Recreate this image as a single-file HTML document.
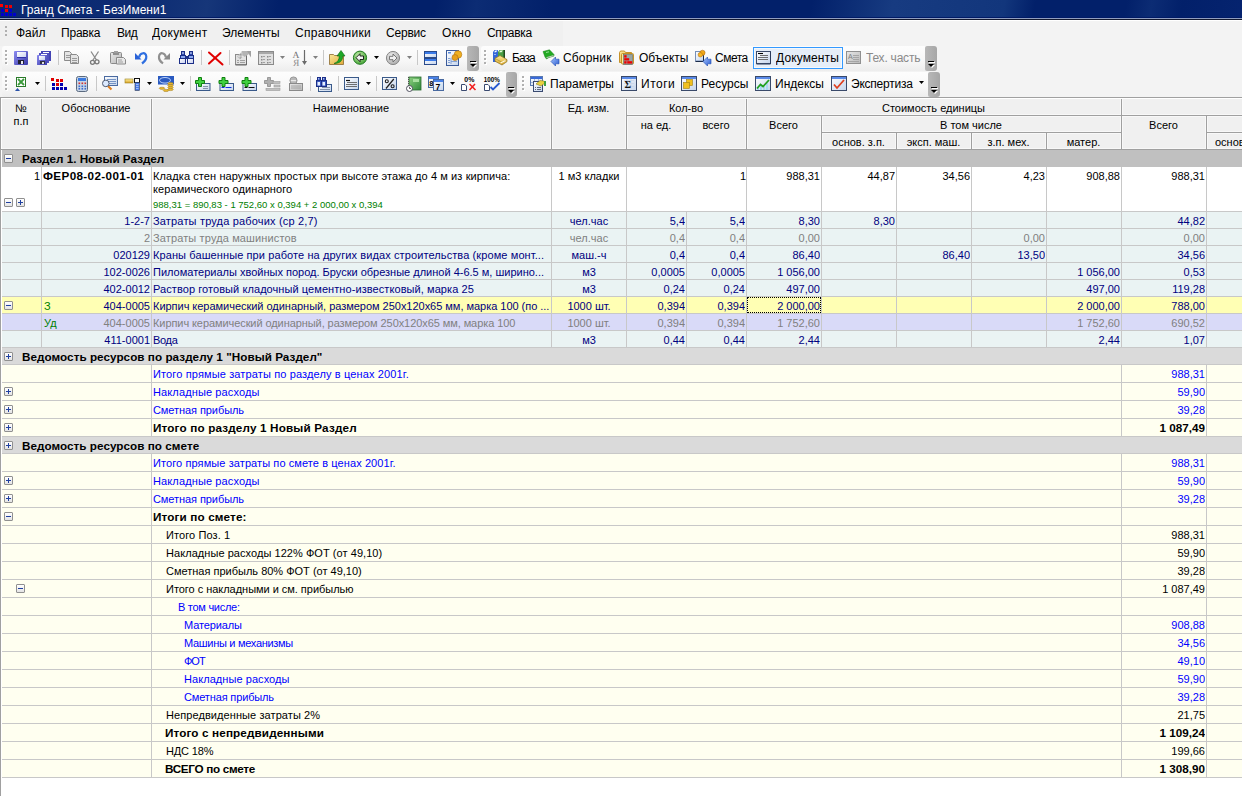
<!DOCTYPE html><html><head><meta charset="utf-8"><style>
*{margin:0;padding:0;box-sizing:border-box}
html,body{width:1242px;height:796px;overflow:hidden;background:#fff;font-family:"Liberation Sans", sans-serif;font-size:11px;color:#000}
#root div{position:absolute}
.t{white-space:nowrap;overflow:hidden}
svg{position:absolute;overflow:visible}
</style></head><body><div id="root">
<div style="left:0px;top:0px;width:1242px;height:17px;background:linear-gradient(100deg,#0a2870 0px,#0e2d74 150px,#163679 205px,#02206a 275px,#02206a 430px,#0c2c74 470px,#02206a 545px,#02206a 800px,#173b81 880px,#12367c 990px,#02206a 1020px,#02206a 1110px,#0c2c74 1135px,#02206a 1165px,#062470 1242px)"></div>
<div style="left:0px;top:17px;width:1242px;height:1px;background:#001a66"></div>
<div style="left:0px;top:18px;width:1242px;height:1px;background:#909ebf"></div>
<div style="left:0px;top:19px;width:1242px;height:1px;background:#12182e"></div>
<div style="left:0px;top:20px;width:1242px;height:1px;background:#ffffff"></div>
<div style="left:0px;top:4px;width:3px;height:3px;background:#f00"></div>
<div style="left:5px;top:5px;width:3px;height:3px;background:#e00"></div>
<div style="left:9px;top:5px;width:3px;height:3px;background:#e00"></div>
<div style="left:1px;top:9px;width:3px;height:3px;background:#00c"></div>
<div style="left:5px;top:9px;width:3px;height:3px;background:#e00"></div>
<div style="left:9px;top:9px;width:3px;height:3px;background:#00c"></div>
<div style="left:1px;top:13px;width:3px;height:3px;background:#00c"></div>
<div style="left:5px;top:13px;width:3px;height:3px;background:#00c"></div>
<div style="left:9px;top:13px;width:3px;height:3px;background:#00c"></div>
<div style="left:13px;top:13px;width:3px;height:3px;background:#00c"></div>
<div class="t" style="left:21px;top:2px;width:300px;height:16px;line-height:16px;text-align:left;color:#fff;font-size:12px">Гранд Смета - БезИмени1</div>
<div style="left:0px;top:21px;width:1242px;height:76px;background:#f3f3f3"></div>
<div style="left:0px;top:21px;width:563px;height:25px;background:#f0f0f0"></div>
<div style="left:5px;top:26px;width:2px;height:2px;background:#b0b0b0"></div>
<div style="left:5px;top:30px;width:2px;height:2px;background:#b0b0b0"></div>
<div style="left:5px;top:34px;width:2px;height:2px;background:#b0b0b0"></div>
<div class="t" style="left:16px;top:25px;width:36px;height:16px;line-height:16px;text-align:left;font-size:12px;color:#000">Файл</div>
<div class="t" style="left:61px;top:25px;width:47px;height:16px;line-height:16px;text-align:left;font-size:12px;color:#000;letter-spacing:-0.200px">Правка</div>
<div class="t" style="left:117px;top:25px;width:28px;height:16px;line-height:16px;text-align:left;font-size:12px;color:#000;letter-spacing:-0.500px">Вид</div>
<div class="t" style="left:152px;top:25px;width:62px;height:16px;line-height:16px;text-align:left;font-size:12px;color:#000;letter-spacing:0.286px">Документ</div>
<div class="t" style="left:222px;top:25px;width:64px;height:16px;line-height:16px;text-align:left;font-size:12px;color:#000">Элементы</div>
<div class="t" style="left:295px;top:25px;width:82px;height:16px;line-height:16px;text-align:left;font-size:12px;color:#000;letter-spacing:0.300px">Справочники</div>
<div class="t" style="left:386px;top:25px;width:47px;height:16px;line-height:16px;text-align:left;font-size:12px;color:#000;letter-spacing:-0.200px">Сервис</div>
<div class="t" style="left:442px;top:25px;width:36px;height:16px;line-height:16px;text-align:left;font-size:12px;color:#000;letter-spacing:0.333px">Окно</div>
<div class="t" style="left:487px;top:25px;width:53px;height:16px;line-height:16px;text-align:left;font-size:12px;color:#000;letter-spacing:-0.333px">Справка</div>
<div style="left:2px;top:46px;width:469px;height:25px;background:linear-gradient(180deg,#fdfdfd 0%,#f7f7f7 60%,#ededed 100%);border-radius:3px"></div>
<div style="left:467px;top:46px;width:12px;height:25px;background:linear-gradient(90deg,#b8b8b8,#a6a6a6);border-radius:2px 3px 3px 2px"></div>
<div style="left:470px;top:61px;width:6px;height:1px;background:#000"></div>
<div style="left:471px;top:62px;width:6px;height:1px;background:#fff"></div>
<svg style="left:470px;top:64px" width="8" height="5"><path d="M1 1h6l-3 3z" fill="#fff"/><path d="M0 0h6l-3 3z" fill="#000"/></svg>
<div style="left:5px;top:50px;width:2px;height:2px;background:#b0b0b0;box-shadow:1px 1px 0 #fff"></div>
<div style="left:5px;top:54px;width:2px;height:2px;background:#b0b0b0;box-shadow:1px 1px 0 #fff"></div>
<div style="left:5px;top:58px;width:2px;height:2px;background:#b0b0b0;box-shadow:1px 1px 0 #fff"></div>
<div style="left:5px;top:62px;width:2px;height:2px;background:#b0b0b0;box-shadow:1px 1px 0 #fff"></div>
<div style="left:481px;top:46px;width:448px;height:25px;background:linear-gradient(180deg,#fdfdfd 0%,#f7f7f7 60%,#ededed 100%);border-radius:3px"></div>
<div style="left:925px;top:46px;width:12px;height:25px;background:linear-gradient(90deg,#b8b8b8,#a6a6a6);border-radius:2px 3px 3px 2px"></div>
<div style="left:928px;top:61px;width:6px;height:1px;background:#000"></div>
<div style="left:929px;top:62px;width:6px;height:1px;background:#fff"></div>
<svg style="left:928px;top:64px" width="8" height="5"><path d="M1 1h6l-3 3z" fill="#fff"/><path d="M0 0h6l-3 3z" fill="#000"/></svg>
<div style="left:484px;top:50px;width:2px;height:2px;background:#b0b0b0;box-shadow:1px 1px 0 #fff"></div>
<div style="left:484px;top:54px;width:2px;height:2px;background:#b0b0b0;box-shadow:1px 1px 0 #fff"></div>
<div style="left:484px;top:58px;width:2px;height:2px;background:#b0b0b0;box-shadow:1px 1px 0 #fff"></div>
<div style="left:484px;top:62px;width:2px;height:2px;background:#b0b0b0;box-shadow:1px 1px 0 #fff"></div>
<div style="left:2px;top:72px;width:508px;height:25px;background:linear-gradient(180deg,#fdfdfd 0%,#f7f7f7 60%,#ededed 100%);border-radius:3px"></div>
<div style="left:506px;top:72px;width:11px;height:25px;background:linear-gradient(90deg,#b8b8b8,#a6a6a6);border-radius:2px 3px 3px 2px"></div>
<div style="left:508px;top:87px;width:6px;height:1px;background:#000"></div>
<div style="left:509px;top:88px;width:6px;height:1px;background:#fff"></div>
<svg style="left:508px;top:90px" width="8" height="5"><path d="M1 1h6l-3 3z" fill="#fff"/><path d="M0 0h6l-3 3z" fill="#000"/></svg>
<div style="left:5px;top:76px;width:2px;height:2px;background:#b0b0b0;box-shadow:1px 1px 0 #fff"></div>
<div style="left:5px;top:80px;width:2px;height:2px;background:#b0b0b0;box-shadow:1px 1px 0 #fff"></div>
<div style="left:5px;top:84px;width:2px;height:2px;background:#b0b0b0;box-shadow:1px 1px 0 #fff"></div>
<div style="left:5px;top:88px;width:2px;height:2px;background:#b0b0b0;box-shadow:1px 1px 0 #fff"></div>
<div style="left:519px;top:72px;width:413px;height:25px;background:linear-gradient(180deg,#fdfdfd 0%,#f7f7f7 60%,#ededed 100%);border-radius:3px"></div>
<div style="left:928px;top:72px;width:12px;height:25px;background:linear-gradient(90deg,#b8b8b8,#a6a6a6);border-radius:2px 3px 3px 2px"></div>
<div style="left:931px;top:87px;width:6px;height:1px;background:#000"></div>
<div style="left:932px;top:88px;width:6px;height:1px;background:#fff"></div>
<svg style="left:931px;top:90px" width="8" height="5"><path d="M1 1h6l-3 3z" fill="#fff"/><path d="M0 0h6l-3 3z" fill="#000"/></svg>
<div style="left:522px;top:76px;width:2px;height:2px;background:#b0b0b0;box-shadow:1px 1px 0 #fff"></div>
<div style="left:522px;top:80px;width:2px;height:2px;background:#b0b0b0;box-shadow:1px 1px 0 #fff"></div>
<div style="left:522px;top:84px;width:2px;height:2px;background:#b0b0b0;box-shadow:1px 1px 0 #fff"></div>
<div style="left:522px;top:88px;width:2px;height:2px;background:#b0b0b0;box-shadow:1px 1px 0 #fff"></div>
<div style="left:58px;top:50px;width:1px;height:15px;background:#c8c8c8"></div>
<div style="left:201px;top:50px;width:1px;height:15px;background:#c8c8c8"></div>
<div style="left:229px;top:50px;width:1px;height:15px;background:#c8c8c8"></div>
<div style="left:323px;top:50px;width:1px;height:15px;background:#c8c8c8"></div>
<div style="left:417px;top:50px;width:1px;height:15px;background:#c8c8c8"></div>
<div style="left:45px;top:76px;width:1px;height:15px;background:#c8c8c8"></div>
<div style="left:96px;top:76px;width:1px;height:15px;background:#c8c8c8"></div>
<div style="left:190px;top:76px;width:1px;height:15px;background:#c8c8c8"></div>
<div style="left:310px;top:76px;width:1px;height:15px;background:#c8c8c8"></div>
<div style="left:338px;top:76px;width:1px;height:15px;background:#c8c8c8"></div>
<div style="left:376px;top:76px;width:1px;height:15px;background:#c8c8c8"></div>
<div style="left:753px;top:47px;width:90px;height:22px;background:#e6eef8;border:1px solid #3399ff;box-shadow:inset 0 0 0 1px #f4f8fc"></div>
<div class="t" style="left:512px;top:50px;width:28px;height:16px;line-height:16px;text-align:left;font-size:12px;color:#000;letter-spacing:-1.000px">База</div>
<div class="t" style="left:563px;top:50px;width:54px;height:16px;line-height:16px;text-align:left;font-size:12px;color:#000;letter-spacing:0.167px">Сборник</div>
<div class="t" style="left:639px;top:50px;width:54px;height:16px;line-height:16px;text-align:left;font-size:12px;color:#000">Объекты</div>
<div class="t" style="left:715px;top:50px;width:37px;height:16px;line-height:16px;text-align:left;font-size:12px;color:#000;letter-spacing:-0.500px">Смета</div>
<div class="t" style="left:776px;top:50px;width:65px;height:16px;line-height:16px;text-align:left;font-size:12px;color:#000;letter-spacing:0.125px">Документы</div>
<div class="t" style="left:866px;top:50px;width:58px;height:16px;line-height:16px;text-align:left;font-size:12px;color:#8a8a8a;letter-spacing:-0.222px">Тех. часть</div>
<div class="t" style="left:550px;top:76px;width:68px;height:16px;line-height:16px;text-align:left;font-size:12px;color:#000">Параметры</div>
<div class="t" style="left:641px;top:76px;width:37px;height:16px;line-height:16px;text-align:left;font-size:12px;color:#000;letter-spacing:0.500px">Итоги</div>
<div class="t" style="left:701px;top:76px;width:51px;height:16px;line-height:16px;text-align:left;font-size:12px;color:#000">Ресурсы</div>
<div class="t" style="left:775px;top:76px;width:53px;height:16px;line-height:16px;text-align:left;font-size:12px;color:#000">Индексы</div>
<div class="t" style="left:851px;top:76px;width:66px;height:16px;line-height:16px;text-align:left;font-size:12px;color:#000;letter-spacing:-0.222px">Экспертиза</div>
<div style="left:0px;top:97px;width:1242px;height:1px;background:#a0a0a0"></div>
<div style="left:0px;top:97px;width:1px;height:699px;background:#a0a0a0"></div>
<div style="left:1px;top:98px;width:1241px;height:698px;background:#fff"></div>
<div style="left:1px;top:98px;width:1241px;height:51px;background:#f0f0f0;border-top:1px solid #fff;border-left:1px solid #fff"></div>
<div style="left:1px;top:149px;width:1241px;height:1px;background:#a0a0a0"></div>
<div style="left:2px;top:148px;width:1240px;height:1px;background:#f8f8f8"></div>
<div style="left:626px;top:115px;width:616px;height:1px;background:#a0a0a0;box-shadow:0 -1px 0 #f8f8f8,0 1px 0 #f8f8f8"></div>
<div style="left:821px;top:132px;width:300px;height:1px;background:#a0a0a0;box-shadow:0 -1px 0 #f8f8f8,0 1px 0 #f8f8f8"></div>
<div style="left:1206px;top:132px;width:36px;height:1px;background:#a0a0a0;box-shadow:0 -1px 0 #f8f8f8,0 1px 0 #f8f8f8"></div>
<div style="left:41px;top:99px;width:1px;height:50px;background:#a0a0a0;box-shadow:-1px 0 0 #f8f8f8,1px 0 0 #f8f8f8"></div>
<div style="left:151px;top:99px;width:1px;height:50px;background:#a0a0a0;box-shadow:-1px 0 0 #f8f8f8,1px 0 0 #f8f8f8"></div>
<div style="left:551px;top:99px;width:1px;height:50px;background:#a0a0a0;box-shadow:-1px 0 0 #f8f8f8,1px 0 0 #f8f8f8"></div>
<div style="left:626px;top:99px;width:1px;height:50px;background:#a0a0a0;box-shadow:-1px 0 0 #f8f8f8,1px 0 0 #f8f8f8"></div>
<div style="left:746px;top:99px;width:1px;height:50px;background:#a0a0a0;box-shadow:-1px 0 0 #f8f8f8,1px 0 0 #f8f8f8"></div>
<div style="left:1121px;top:99px;width:1px;height:50px;background:#a0a0a0;box-shadow:-1px 0 0 #f8f8f8,1px 0 0 #f8f8f8"></div>
<div style="left:686px;top:116px;width:1px;height:33px;background:#a0a0a0;box-shadow:-1px 0 0 #f8f8f8,1px 0 0 #f8f8f8"></div>
<div style="left:821px;top:116px;width:1px;height:33px;background:#a0a0a0;box-shadow:-1px 0 0 #f8f8f8,1px 0 0 #f8f8f8"></div>
<div style="left:896px;top:133px;width:1px;height:16px;background:#a0a0a0;box-shadow:-1px 0 0 #f8f8f8,1px 0 0 #f8f8f8"></div>
<div style="left:971px;top:133px;width:1px;height:16px;background:#a0a0a0;box-shadow:-1px 0 0 #f8f8f8,1px 0 0 #f8f8f8"></div>
<div style="left:1046px;top:133px;width:1px;height:16px;background:#a0a0a0;box-shadow:-1px 0 0 #f8f8f8,1px 0 0 #f8f8f8"></div>
<div style="left:1206px;top:116px;width:1px;height:33px;background:#a0a0a0;box-shadow:-1px 0 0 #f8f8f8,1px 0 0 #f8f8f8"></div>
<div style="left:626px;top:115px;width:616px;height:1px;background:#a0a0a0"></div>
<div style="left:821px;top:132px;width:300px;height:1px;background:#a0a0a0"></div>
<div style="left:1206px;top:132px;width:36px;height:1px;background:#a0a0a0"></div>
<div class="t" style="left:1px;top:102px;width:40px;height:13px;line-height:13px;text-align:center;color:#000">№</div>
<div class="t" style="left:1px;top:115px;width:40px;height:13px;line-height:13px;text-align:center;color:#000">п.п</div>
<div class="t" style="left:41px;top:102px;width:110px;height:13px;line-height:13px;text-align:center;color:#000">Обоснование</div>
<div class="t" style="left:151px;top:102px;width:400px;height:13px;line-height:13px;text-align:center;color:#000">Наименование</div>
<div class="t" style="left:551px;top:102px;width:75px;height:13px;line-height:13px;text-align:center;color:#000">Ед. изм.</div>
<div class="t" style="left:626px;top:102px;width:120px;height:13px;line-height:13px;text-align:center;color:#000">Кол-во</div>
<div class="t" style="left:626px;top:119px;width:60px;height:13px;line-height:13px;text-align:center;color:#000">на ед.</div>
<div class="t" style="left:686px;top:119px;width:60px;height:13px;line-height:13px;text-align:center;color:#000">всего</div>
<div class="t" style="left:746px;top:102px;width:375px;height:13px;line-height:13px;text-align:center;color:#000">Стоимость единицы</div>
<div class="t" style="left:746px;top:119px;width:75px;height:13px;line-height:13px;text-align:center;color:#000">Всего</div>
<div class="t" style="left:821px;top:119px;width:300px;height:13px;line-height:13px;text-align:center;color:#000">В том числе</div>
<div class="t" style="left:821px;top:136px;width:75px;height:13px;line-height:13px;text-align:center;color:#000">основ. з.п.</div>
<div class="t" style="left:896px;top:136px;width:75px;height:13px;line-height:13px;text-align:center;color:#000">эксп. маш.</div>
<div class="t" style="left:971px;top:136px;width:75px;height:13px;line-height:13px;text-align:center;color:#000">з.п. мех.</div>
<div class="t" style="left:1046px;top:136px;width:75px;height:13px;line-height:13px;text-align:center;color:#000">матер.</div>
<div class="t" style="left:1121px;top:119px;width:85px;height:13px;line-height:13px;text-align:center;color:#000">Всего</div>
<div class="t" style="left:1215px;top:136px;width:60px;height:13px;line-height:13px;text-align:left;color:#000">основ. з.п.</div>
<div style="left:2px;top:150px;width:1240px;height:17px;background:#c0c0c0"></div>
<div style="left:4px;top:154px;width:9px;height:9px;background:linear-gradient(180deg,#fff,#e4e4e4);border:1px solid #909090;border-radius:1px"></div>
<div style="left:6px;top:158px;width:5px;height:1px;background:#2040a0"></div>
<div class="t" style="left:22px;top:152px;width:400px;height:13px;line-height:13px;text-align:left;font-weight:bold;font-size:11.7px">Раздел 1. Новый Раздел</div>
<div class="t" style="left:2px;top:170px;width:38px;height:13px;line-height:13px;text-align:right;color:#000;">1</div>
<div class="t" style="left:43px;top:169px;width:107px;height:13px;line-height:13px;text-align:left;color:#000;font-weight:bold;font-size:11.7px;letter-spacing:0.357px">ФЕР08-02-001-01</div>
<div class="t" style="left:153px;top:170px;width:398px;height:13px;line-height:13px;text-align:left;color:#000;letter-spacing:0.095px">Кладка стен наружных простых при высоте этажа до 4 м из кирпича:</div>
<div class="t" style="left:153px;top:183px;width:398px;height:13px;line-height:13px;text-align:left;color:#000;letter-spacing:0.087px">керамического одинарного</div>
<div class="t" style="left:153px;top:200px;width:398px;height:10px;line-height:10px;text-align:left;color:#008000;font-size:9.5px">988,31 = 890,83 - 1 752,60 x 0,394 + 2 000,00 x 0,394</div>
<div class="t" style="left:552px;top:170px;width:74px;height:13px;line-height:13px;text-align:center;color:#000;">1 м3 кладки</div>
<div class="t" style="left:687px;top:170px;width:59px;height:13px;line-height:13px;text-align:right;color:#000;">1</div>
<div class="t" style="left:747px;top:170px;width:73px;height:13px;line-height:13px;text-align:right;color:#000;">988,31</div>
<div class="t" style="left:822px;top:170px;width:73px;height:13px;line-height:13px;text-align:right;color:#000;">44,87</div>
<div class="t" style="left:897px;top:170px;width:73px;height:13px;line-height:13px;text-align:right;color:#000;">34,56</div>
<div class="t" style="left:972px;top:170px;width:73px;height:13px;line-height:13px;text-align:right;color:#000;">4,23</div>
<div class="t" style="left:1047px;top:170px;width:73px;height:13px;line-height:13px;text-align:right;color:#000;">908,88</div>
<div class="t" style="left:1122px;top:170px;width:83px;height:13px;line-height:13px;text-align:right;color:#000;">988,31</div>
<div style="left:4px;top:198px;width:9px;height:9px;background:linear-gradient(180deg,#fff,#e4e4e4);border:1px solid #909090;border-radius:1px"></div>
<div style="left:6px;top:202px;width:5px;height:1px;background:#2040a0"></div>
<div style="left:16px;top:198px;width:9px;height:9px;background:linear-gradient(180deg,#fff,#e4e4e4);border:1px solid #909090;border-radius:1px"></div>
<div style="left:18px;top:202px;width:5px;height:1px;background:#2040a0"></div>
<div style="left:20px;top:200px;width:1px;height:5px;background:#2040a0"></div>
<div style="left:2px;top:212px;width:1240px;height:16px;background:#eaf3f3"></div>
<div class="t" style="left:42px;top:215px;width:108px;height:13px;line-height:13px;text-align:right;color:#000080;">1-2-7</div>
<div class="t" style="left:153px;top:215px;width:397px;height:13px;line-height:13px;text-align:left;color:#000080;;letter-spacing:0.172px">Затраты труда рабочих (ср 2,7)</div>
<div class="t" style="left:552px;top:215px;width:74px;height:13px;line-height:13px;text-align:center;color:#000080;">чел.час</div>
<div class="t" style="left:627px;top:215px;width:58px;height:13px;line-height:13px;text-align:right;color:#000080;">5,4</div>
<div class="t" style="left:687px;top:215px;width:58px;height:13px;line-height:13px;text-align:right;color:#000080;">5,4</div>
<div class="t" style="left:747px;top:215px;width:73px;height:13px;line-height:13px;text-align:right;color:#000080;">8,30</div>
<div class="t" style="left:822px;top:215px;width:73px;height:13px;line-height:13px;text-align:right;color:#000080;">8,30</div>
<div class="t" style="left:1122px;top:215px;width:83px;height:13px;line-height:13px;text-align:right;color:#000080;">44,82</div>
<div style="left:2px;top:229px;width:1240px;height:16px;background:#eaf3f3"></div>
<div class="t" style="left:42px;top:232px;width:108px;height:13px;line-height:13px;text-align:right;color:#808080;">2</div>
<div class="t" style="left:153px;top:232px;width:397px;height:13px;line-height:13px;text-align:left;color:#808080;;letter-spacing:0.130px">Затраты труда машинистов</div>
<div class="t" style="left:552px;top:232px;width:74px;height:13px;line-height:13px;text-align:center;color:#808080;">чел.час</div>
<div class="t" style="left:627px;top:232px;width:58px;height:13px;line-height:13px;text-align:right;color:#808080;">0,4</div>
<div class="t" style="left:687px;top:232px;width:58px;height:13px;line-height:13px;text-align:right;color:#808080;">0,4</div>
<div class="t" style="left:747px;top:232px;width:73px;height:13px;line-height:13px;text-align:right;color:#808080;">0,00</div>
<div class="t" style="left:972px;top:232px;width:73px;height:13px;line-height:13px;text-align:right;color:#808080;">0,00</div>
<div class="t" style="left:1122px;top:232px;width:83px;height:13px;line-height:13px;text-align:right;color:#808080;">0,00</div>
<div style="left:2px;top:246px;width:1240px;height:16px;background:#eaf3f3"></div>
<div class="t" style="left:42px;top:249px;width:108px;height:13px;line-height:13px;text-align:right;color:#000080;">020129</div>
<div class="t" style="left:153px;top:249px;width:397px;height:13px;line-height:13px;text-align:left;color:#000080;;letter-spacing:0.101px">Краны башенные при работе на других видах строительства (кроме монт...</div>
<div class="t" style="left:552px;top:249px;width:74px;height:13px;line-height:13px;text-align:center;color:#000080;">маш.-ч</div>
<div class="t" style="left:627px;top:249px;width:58px;height:13px;line-height:13px;text-align:right;color:#000080;">0,4</div>
<div class="t" style="left:687px;top:249px;width:58px;height:13px;line-height:13px;text-align:right;color:#000080;">0,4</div>
<div class="t" style="left:747px;top:249px;width:73px;height:13px;line-height:13px;text-align:right;color:#000080;">86,40</div>
<div class="t" style="left:897px;top:249px;width:73px;height:13px;line-height:13px;text-align:right;color:#000080;">86,40</div>
<div class="t" style="left:972px;top:249px;width:73px;height:13px;line-height:13px;text-align:right;color:#000080;">13,50</div>
<div class="t" style="left:1122px;top:249px;width:83px;height:13px;line-height:13px;text-align:right;color:#000080;">34,56</div>
<div style="left:2px;top:263px;width:1240px;height:16px;background:#eaf3f3"></div>
<div class="t" style="left:42px;top:266px;width:108px;height:13px;line-height:13px;text-align:right;color:#000080;">102-0026</div>
<div class="t" style="left:153px;top:266px;width:397px;height:13px;line-height:13px;text-align:left;color:#000080;">Пиломатериалы хвойных пород. Бруски обрезные длиной 4-6.5 м, ширино...</div>
<div class="t" style="left:552px;top:266px;width:74px;height:13px;line-height:13px;text-align:center;color:#000080;">м3</div>
<div class="t" style="left:627px;top:266px;width:58px;height:13px;line-height:13px;text-align:right;color:#000080;">0,0005</div>
<div class="t" style="left:687px;top:266px;width:58px;height:13px;line-height:13px;text-align:right;color:#000080;">0,0005</div>
<div class="t" style="left:747px;top:266px;width:73px;height:13px;line-height:13px;text-align:right;color:#000080;">1 056,00</div>
<div class="t" style="left:1047px;top:266px;width:73px;height:13px;line-height:13px;text-align:right;color:#000080;">1 056,00</div>
<div class="t" style="left:1122px;top:266px;width:83px;height:13px;line-height:13px;text-align:right;color:#000080;">0,53</div>
<div style="left:2px;top:280px;width:1240px;height:16px;background:#eaf3f3"></div>
<div class="t" style="left:42px;top:283px;width:108px;height:13px;line-height:13px;text-align:right;color:#000080;">402-0012</div>
<div class="t" style="left:153px;top:283px;width:397px;height:13px;line-height:13px;text-align:left;color:#000080;;letter-spacing:0.073px">Раствор готовый кладочный цементно-известковый, марка 25</div>
<div class="t" style="left:552px;top:283px;width:74px;height:13px;line-height:13px;text-align:center;color:#000080;">м3</div>
<div class="t" style="left:627px;top:283px;width:58px;height:13px;line-height:13px;text-align:right;color:#000080;">0,24</div>
<div class="t" style="left:687px;top:283px;width:58px;height:13px;line-height:13px;text-align:right;color:#000080;">0,24</div>
<div class="t" style="left:747px;top:283px;width:73px;height:13px;line-height:13px;text-align:right;color:#000080;">497,00</div>
<div class="t" style="left:1047px;top:283px;width:73px;height:13px;line-height:13px;text-align:right;color:#000080;">497,00</div>
<div class="t" style="left:1122px;top:283px;width:83px;height:13px;line-height:13px;text-align:right;color:#000080;">119,28</div>
<div style="left:2px;top:297px;width:1240px;height:16px;background:#ffffb4"></div>
<div class="t" style="left:42px;top:300px;width:108px;height:13px;line-height:13px;text-align:right;color:#000080;">404-0005</div>
<div class="t" style="left:153px;top:300px;width:397px;height:13px;line-height:13px;text-align:left;color:#000080;;letter-spacing:-0.028px">Кирпич керамический одинарный, размером 250х120х65 мм, марка 100 (по ...</div>
<div class="t" style="left:552px;top:300px;width:74px;height:13px;line-height:13px;text-align:center;color:#000080;">1000 шт.</div>
<div class="t" style="left:627px;top:300px;width:58px;height:13px;line-height:13px;text-align:right;color:#000080;">0,394</div>
<div class="t" style="left:687px;top:300px;width:58px;height:13px;line-height:13px;text-align:right;color:#000080;">0,394</div>
<div class="t" style="left:747px;top:300px;width:73px;height:13px;line-height:13px;text-align:right;color:#000080;">2 000,00</div>
<div class="t" style="left:1047px;top:300px;width:73px;height:13px;line-height:13px;text-align:right;color:#000080;">2 000,00</div>
<div class="t" style="left:1122px;top:300px;width:83px;height:13px;line-height:13px;text-align:right;color:#000080;">788,00</div>
<div style="left:2px;top:314px;width:1240px;height:16px;background:#d9daf8"></div>
<div class="t" style="left:42px;top:317px;width:108px;height:13px;line-height:13px;text-align:right;color:#808080;">404-0005</div>
<div class="t" style="left:153px;top:317px;width:397px;height:13px;line-height:13px;text-align:left;color:#808080;;letter-spacing:-0.079px">Кирпич керамический одинарный, размером 250х120х65 мм, марка 100</div>
<div class="t" style="left:552px;top:317px;width:74px;height:13px;line-height:13px;text-align:center;color:#808080;">1000 шт.</div>
<div class="t" style="left:627px;top:317px;width:58px;height:13px;line-height:13px;text-align:right;color:#808080;">0,394</div>
<div class="t" style="left:687px;top:317px;width:58px;height:13px;line-height:13px;text-align:right;color:#808080;">0,394</div>
<div class="t" style="left:747px;top:317px;width:73px;height:13px;line-height:13px;text-align:right;color:#808080;">1 752,60</div>
<div class="t" style="left:1047px;top:317px;width:73px;height:13px;line-height:13px;text-align:right;color:#808080;">1 752,60</div>
<div class="t" style="left:1122px;top:317px;width:83px;height:13px;line-height:13px;text-align:right;color:#808080;">690,52</div>
<div style="left:2px;top:331px;width:1240px;height:16px;background:#eaf3f3"></div>
<div class="t" style="left:42px;top:334px;width:108px;height:13px;line-height:13px;text-align:right;color:#000080;">411-0001</div>
<div class="t" style="left:153px;top:334px;width:397px;height:13px;line-height:13px;text-align:left;color:#000080;;letter-spacing:-0.333px">Вода</div>
<div class="t" style="left:552px;top:334px;width:74px;height:13px;line-height:13px;text-align:center;color:#000080;">м3</div>
<div class="t" style="left:627px;top:334px;width:58px;height:13px;line-height:13px;text-align:right;color:#000080;">0,44</div>
<div class="t" style="left:687px;top:334px;width:58px;height:13px;line-height:13px;text-align:right;color:#000080;">0,44</div>
<div class="t" style="left:747px;top:334px;width:73px;height:13px;line-height:13px;text-align:right;color:#000080;">2,44</div>
<div class="t" style="left:1047px;top:334px;width:73px;height:13px;line-height:13px;text-align:right;color:#000080;">2,44</div>
<div class="t" style="left:1122px;top:334px;width:83px;height:13px;line-height:13px;text-align:right;color:#000080;">1,07</div>
<div style="left:2px;top:211px;width:1240px;height:1px;background:#c8c8c8"></div>
<div style="left:2px;top:228px;width:1240px;height:1px;background:#c8c8c8"></div>
<div style="left:2px;top:245px;width:1240px;height:1px;background:#c8c8c8"></div>
<div style="left:2px;top:262px;width:1240px;height:1px;background:#c8c8c8"></div>
<div style="left:2px;top:279px;width:1240px;height:1px;background:#c8c8c8"></div>
<div style="left:2px;top:296px;width:1240px;height:1px;background:#c8c8c8"></div>
<div style="left:2px;top:313px;width:1240px;height:1px;background:#c8c8c8"></div>
<div style="left:2px;top:330px;width:1240px;height:1px;background:#c8c8c8"></div>
<div style="left:2px;top:347px;width:1240px;height:1px;background:#c8c8c8"></div>
<div style="left:41px;top:167px;width:1px;height:180px;background:#c8c8c8"></div>
<div style="left:151px;top:167px;width:1px;height:180px;background:#c8c8c8"></div>
<div style="left:551px;top:167px;width:1px;height:180px;background:#c8c8c8"></div>
<div style="left:626px;top:167px;width:1px;height:180px;background:#c8c8c8"></div>
<div style="left:686px;top:212px;width:1px;height:135px;background:#c8c8c8"></div>
<div style="left:746px;top:167px;width:1px;height:180px;background:#c8c8c8"></div>
<div style="left:821px;top:167px;width:1px;height:180px;background:#c8c8c8"></div>
<div style="left:896px;top:167px;width:1px;height:180px;background:#c8c8c8"></div>
<div style="left:971px;top:167px;width:1px;height:180px;background:#c8c8c8"></div>
<div style="left:1046px;top:167px;width:1px;height:180px;background:#c8c8c8"></div>
<div style="left:1121px;top:167px;width:1px;height:180px;background:#c8c8c8"></div>
<div style="left:1206px;top:167px;width:1px;height:180px;background:#c8c8c8"></div>
<div style="left:4px;top:301px;width:9px;height:9px;background:linear-gradient(180deg,#fff,#e4e4e4);border:1px solid #909090;border-radius:1px"></div>
<div style="left:6px;top:305px;width:5px;height:1px;background:#2040a0"></div>
<div class="t" style="left:44px;top:300px;width:30px;height:13px;line-height:13px;text-align:left;color:#008000">З</div>
<div class="t" style="left:44px;top:317px;width:30px;height:13px;line-height:13px;text-align:left;color:#008000">Уд</div>
<div style="left:747px;top:297px;width:74px;height:16px;border:1px dotted #000"></div>
<div style="left:2px;top:348px;width:1240px;height:16px;background:#dadada"></div>
<div style="left:2px;top:347px;width:1240px;height:1px;background:#c8c8c8"></div>
<div style="left:2px;top:364px;width:1240px;height:1px;background:#c8c8c8"></div>
<div style="left:4px;top:352px;width:9px;height:9px;background:linear-gradient(180deg,#fff,#e4e4e4);border:1px solid #909090;border-radius:1px"></div>
<div style="left:6px;top:356px;width:5px;height:1px;background:#2040a0"></div>
<div style="left:8px;top:354px;width:1px;height:5px;background:#2040a0"></div>
<div class="t" style="left:22px;top:350px;width:600px;height:13px;line-height:13px;text-align:left;font-weight:bold;font-size:11.7px;letter-spacing:0.044px">Ведомость ресурсов по разделу 1 "Новый Раздел"</div>
<div style="left:2px;top:365px;width:1240px;height:17px;background:#fffff0"></div>
<div style="left:2px;top:382px;width:1240px;height:1px;background:#c8c8c8"></div>
<div class="t" style="left:153px;top:368px;width:900px;height:13px;line-height:13px;text-align:left;color:#0000ff;;letter-spacing:0.133px">Итого прямые затраты по разделу в ценах 2001г.</div>
<div class="t" style="left:1122px;top:368px;width:83px;height:13px;line-height:13px;text-align:right;color:#0000ff;">988,31</div>
<div style="left:2px;top:383px;width:1240px;height:17px;background:#fffff0"></div>
<div style="left:2px;top:400px;width:1240px;height:1px;background:#c8c8c8"></div>
<div class="t" style="left:153px;top:386px;width:900px;height:13px;line-height:13px;text-align:left;color:#0000ff;;letter-spacing:0.125px">Накладные расходы</div>
<div class="t" style="left:1122px;top:386px;width:83px;height:13px;line-height:13px;text-align:right;color:#0000ff;">59,90</div>
<div style="left:4px;top:387px;width:9px;height:9px;background:linear-gradient(180deg,#fff,#e4e4e4);border:1px solid #909090;border-radius:1px"></div>
<div style="left:6px;top:391px;width:5px;height:1px;background:#2040a0"></div>
<div style="left:8px;top:389px;width:1px;height:5px;background:#2040a0"></div>
<div style="left:2px;top:401px;width:1240px;height:17px;background:#fffff0"></div>
<div style="left:2px;top:418px;width:1240px;height:1px;background:#c8c8c8"></div>
<div class="t" style="left:153px;top:404px;width:900px;height:13px;line-height:13px;text-align:left;color:#0000ff;;letter-spacing:-0.071px">Сметная прибыль</div>
<div class="t" style="left:1122px;top:404px;width:83px;height:13px;line-height:13px;text-align:right;color:#0000ff;">39,28</div>
<div style="left:4px;top:405px;width:9px;height:9px;background:linear-gradient(180deg,#fff,#e4e4e4);border:1px solid #909090;border-radius:1px"></div>
<div style="left:6px;top:409px;width:5px;height:1px;background:#2040a0"></div>
<div style="left:8px;top:407px;width:1px;height:5px;background:#2040a0"></div>
<div style="left:2px;top:419px;width:1240px;height:17px;background:#fffff0"></div>
<div style="left:2px;top:436px;width:1240px;height:1px;background:#c8c8c8"></div>
<div class="t" style="left:153px;top:421px;width:900px;height:13px;line-height:13px;text-align:left;color:#000;font-weight:bold;font-size:11.7px;;letter-spacing:0.167px">Итого по разделу 1 Новый Раздел</div>
<div class="t" style="left:1122px;top:421px;width:83px;height:13px;line-height:13px;text-align:right;color:#000;font-weight:bold;font-size:11.7px;">1 087,49</div>
<div style="left:4px;top:423px;width:9px;height:9px;background:linear-gradient(180deg,#fff,#e4e4e4);border:1px solid #909090;border-radius:1px"></div>
<div style="left:6px;top:427px;width:5px;height:1px;background:#2040a0"></div>
<div style="left:8px;top:425px;width:1px;height:5px;background:#2040a0"></div>
<div style="left:2px;top:437px;width:1240px;height:16px;background:#dadada"></div>
<div style="left:2px;top:436px;width:1240px;height:1px;background:#c8c8c8"></div>
<div style="left:2px;top:453px;width:1240px;height:1px;background:#c8c8c8"></div>
<div style="left:4px;top:441px;width:9px;height:9px;background:linear-gradient(180deg,#fff,#e4e4e4);border:1px solid #909090;border-radius:1px"></div>
<div style="left:6px;top:445px;width:5px;height:1px;background:#2040a0"></div>
<div style="left:8px;top:443px;width:1px;height:5px;background:#2040a0"></div>
<div class="t" style="left:22px;top:439px;width:600px;height:13px;line-height:13px;text-align:left;font-weight:bold;font-size:11.7px;letter-spacing:0.038px">Ведомость ресурсов по смете</div>
<div style="left:2px;top:454px;width:1240px;height:17px;background:#fffff0"></div>
<div style="left:2px;top:471px;width:1240px;height:1px;background:#c8c8c8"></div>
<div class="t" style="left:153px;top:457px;width:900px;height:13px;line-height:13px;text-align:left;color:#0000ff;;letter-spacing:0.093px">Итого прямые затраты по смете в ценах 2001г.</div>
<div class="t" style="left:1122px;top:457px;width:83px;height:13px;line-height:13px;text-align:right;color:#0000ff;">988,31</div>
<div style="left:2px;top:472px;width:1240px;height:17px;background:#fffff0"></div>
<div style="left:2px;top:489px;width:1240px;height:1px;background:#c8c8c8"></div>
<div class="t" style="left:153px;top:475px;width:900px;height:13px;line-height:13px;text-align:left;color:#0000ff;;letter-spacing:0.125px">Накладные расходы</div>
<div class="t" style="left:1122px;top:475px;width:83px;height:13px;line-height:13px;text-align:right;color:#0000ff;">59,90</div>
<div style="left:4px;top:476px;width:9px;height:9px;background:linear-gradient(180deg,#fff,#e4e4e4);border:1px solid #909090;border-radius:1px"></div>
<div style="left:6px;top:480px;width:5px;height:1px;background:#2040a0"></div>
<div style="left:8px;top:478px;width:1px;height:5px;background:#2040a0"></div>
<div style="left:2px;top:490px;width:1240px;height:17px;background:#fffff0"></div>
<div style="left:2px;top:507px;width:1240px;height:1px;background:#c8c8c8"></div>
<div class="t" style="left:153px;top:493px;width:900px;height:13px;line-height:13px;text-align:left;color:#0000ff;;letter-spacing:-0.071px">Сметная прибыль</div>
<div class="t" style="left:1122px;top:493px;width:83px;height:13px;line-height:13px;text-align:right;color:#0000ff;">39,28</div>
<div style="left:4px;top:494px;width:9px;height:9px;background:linear-gradient(180deg,#fff,#e4e4e4);border:1px solid #909090;border-radius:1px"></div>
<div style="left:6px;top:498px;width:5px;height:1px;background:#2040a0"></div>
<div style="left:8px;top:496px;width:1px;height:5px;background:#2040a0"></div>
<div style="left:2px;top:508px;width:1240px;height:17px;background:#fffff0"></div>
<div style="left:2px;top:525px;width:1240px;height:1px;background:#c8c8c8"></div>
<div class="t" style="left:153px;top:510px;width:900px;height:13px;line-height:13px;text-align:left;color:#000;font-weight:bold;font-size:11.7px;;letter-spacing:0.143px">Итоги по смете:</div>
<div style="left:4px;top:512px;width:9px;height:9px;background:linear-gradient(180deg,#fff,#e4e4e4);border:1px solid #909090;border-radius:1px"></div>
<div style="left:6px;top:516px;width:5px;height:1px;background:#2040a0"></div>
<div style="left:2px;top:526px;width:1240px;height:17px;background:#fffff0"></div>
<div style="left:2px;top:543px;width:1240px;height:1px;background:#c8c8c8"></div>
<div class="t" style="left:166px;top:529px;width:900px;height:13px;line-height:13px;text-align:left;color:#000;;letter-spacing:0.091px">Итого Поз. 1</div>
<div class="t" style="left:1122px;top:529px;width:83px;height:13px;line-height:13px;text-align:right;color:#000;">988,31</div>
<div style="left:2px;top:544px;width:1240px;height:17px;background:#fffff0"></div>
<div style="left:2px;top:561px;width:1240px;height:1px;background:#c8c8c8"></div>
<div class="t" style="left:166px;top:547px;width:900px;height:13px;line-height:13px;text-align:left;color:#000;;letter-spacing:0.056px">Накладные расходы 122% ФОТ (от 49,10)</div>
<div class="t" style="left:1122px;top:547px;width:83px;height:13px;line-height:13px;text-align:right;color:#000;">59,90</div>
<div style="left:2px;top:562px;width:1240px;height:17px;background:#fffff0"></div>
<div style="left:2px;top:579px;width:1240px;height:1px;background:#c8c8c8"></div>
<div class="t" style="left:166px;top:565px;width:900px;height:13px;line-height:13px;text-align:left;color:#000;">Сметная прибыль 80% ФОТ (от 49,10)</div>
<div class="t" style="left:1122px;top:565px;width:83px;height:13px;line-height:13px;text-align:right;color:#000;">39,28</div>
<div style="left:2px;top:580px;width:1240px;height:17px;background:#fffff0"></div>
<div style="left:2px;top:597px;width:1240px;height:1px;background:#c8c8c8"></div>
<div class="t" style="left:166px;top:583px;width:900px;height:13px;line-height:13px;text-align:left;color:#000;;letter-spacing:-0.031px">Итого с накладными и см. прибылью</div>
<div class="t" style="left:1122px;top:583px;width:83px;height:13px;line-height:13px;text-align:right;color:#000;">1 087,49</div>
<div style="left:16px;top:584px;width:9px;height:9px;background:linear-gradient(180deg,#fff,#e4e4e4);border:1px solid #909090;border-radius:1px"></div>
<div style="left:18px;top:588px;width:5px;height:1px;background:#2040a0"></div>
<div style="left:2px;top:598px;width:1240px;height:17px;background:#fffff0"></div>
<div style="left:2px;top:615px;width:1240px;height:1px;background:#c8c8c8"></div>
<div class="t" style="left:178px;top:601px;width:900px;height:13px;line-height:13px;text-align:left;color:#0000ff;;letter-spacing:-0.273px">В том числе:</div>
<div style="left:2px;top:616px;width:1240px;height:17px;background:#fffff0"></div>
<div style="left:2px;top:633px;width:1240px;height:1px;background:#c8c8c8"></div>
<div class="t" style="left:184px;top:619px;width:900px;height:13px;line-height:13px;text-align:left;color:#0000ff;;letter-spacing:-0.125px">Материалы</div>
<div class="t" style="left:1122px;top:619px;width:83px;height:13px;line-height:13px;text-align:right;color:#0000ff;">908,88</div>
<div style="left:2px;top:634px;width:1240px;height:17px;background:#fffff0"></div>
<div style="left:2px;top:651px;width:1240px;height:1px;background:#c8c8c8"></div>
<div class="t" style="left:184px;top:637px;width:900px;height:13px;line-height:13px;text-align:left;color:#0000ff;;letter-spacing:-0.294px">Машины и механизмы</div>
<div class="t" style="left:1122px;top:637px;width:83px;height:13px;line-height:13px;text-align:right;color:#0000ff;">34,56</div>
<div style="left:2px;top:652px;width:1240px;height:17px;background:#fffff0"></div>
<div style="left:2px;top:669px;width:1240px;height:1px;background:#c8c8c8"></div>
<div class="t" style="left:184px;top:655px;width:900px;height:13px;line-height:13px;text-align:left;color:#0000ff;;letter-spacing:-1.000px">ФОТ</div>
<div class="t" style="left:1122px;top:655px;width:83px;height:13px;line-height:13px;text-align:right;color:#0000ff;">49,10</div>
<div style="left:2px;top:670px;width:1240px;height:17px;background:#fffff0"></div>
<div style="left:2px;top:687px;width:1240px;height:1px;background:#c8c8c8"></div>
<div class="t" style="left:184px;top:673px;width:900px;height:13px;line-height:13px;text-align:left;color:#0000ff;;letter-spacing:0.062px">Накладные расходы</div>
<div class="t" style="left:1122px;top:673px;width:83px;height:13px;line-height:13px;text-align:right;color:#0000ff;">59,90</div>
<div style="left:2px;top:688px;width:1240px;height:17px;background:#fffff0"></div>
<div style="left:2px;top:705px;width:1240px;height:1px;background:#c8c8c8"></div>
<div class="t" style="left:184px;top:691px;width:900px;height:13px;line-height:13px;text-align:left;color:#0000ff;;letter-spacing:-0.143px">Сметная прибыль</div>
<div class="t" style="left:1122px;top:691px;width:83px;height:13px;line-height:13px;text-align:right;color:#0000ff;">39,28</div>
<div style="left:2px;top:706px;width:1240px;height:17px;background:#fffff0"></div>
<div style="left:2px;top:723px;width:1240px;height:1px;background:#c8c8c8"></div>
<div class="t" style="left:166px;top:709px;width:900px;height:13px;line-height:13px;text-align:left;color:#000;;letter-spacing:0.083px">Непредвиденные затраты 2%</div>
<div class="t" style="left:1122px;top:709px;width:83px;height:13px;line-height:13px;text-align:right;color:#000;">21,75</div>
<div style="left:2px;top:724px;width:1240px;height:17px;background:#fffff0"></div>
<div style="left:2px;top:741px;width:1240px;height:1px;background:#c8c8c8"></div>
<div class="t" style="left:165px;top:726px;width:900px;height:13px;line-height:13px;text-align:left;color:#000;font-weight:bold;font-size:11.7px;;letter-spacing:0.136px">Итого с непредвиденными</div>
<div class="t" style="left:1122px;top:726px;width:83px;height:13px;line-height:13px;text-align:right;color:#000;font-weight:bold;font-size:11.7px;">1 109,24</div>
<div style="left:2px;top:742px;width:1240px;height:17px;background:#fffff0"></div>
<div style="left:2px;top:759px;width:1240px;height:1px;background:#c8c8c8"></div>
<div class="t" style="left:166px;top:745px;width:900px;height:13px;line-height:13px;text-align:left;color:#000;;letter-spacing:-0.167px">НДС 18%</div>
<div class="t" style="left:1122px;top:745px;width:83px;height:13px;line-height:13px;text-align:right;color:#000;">199,66</div>
<div style="left:2px;top:760px;width:1240px;height:17px;background:#fffff0"></div>
<div style="left:2px;top:777px;width:1240px;height:1px;background:#c8c8c8"></div>
<div class="t" style="left:165px;top:762px;width:900px;height:13px;line-height:13px;text-align:left;color:#000;font-weight:bold;font-size:11.7px;;letter-spacing:-0.308px">ВСЕГО по смете</div>
<div class="t" style="left:1122px;top:762px;width:83px;height:13px;line-height:13px;text-align:right;color:#000;font-weight:bold;font-size:11.7px;">1 308,90</div>
<div style="left:151px;top:364px;width:1px;height:72px;background:#c8c8c8"></div>
<div style="left:151px;top:453px;width:1px;height:324px;background:#c8c8c8"></div>
<div style="left:1121px;top:364px;width:1px;height:72px;background:#c8c8c8"></div>
<div style="left:1121px;top:453px;width:1px;height:324px;background:#c8c8c8"></div>
<div style="left:1206px;top:364px;width:1px;height:72px;background:#c8c8c8"></div>
<div style="left:1206px;top:453px;width:1px;height:324px;background:#c8c8c8"></div>
<svg style="left:0;top:0" width="1242" height="100" viewBox="0 0 1242 100" shape-rendering="geometricPrecision">
<defs>
<linearGradient id="gFlop" x1="0" y1="0" x2="1" y2="1"><stop offset="0" stop-color="#8c8cf0"/><stop offset="1" stop-color="#3a3aa8"/></linearGradient>
<linearGradient id="gLab" x1="0" y1="0" x2="1" y2="1"><stop offset="0" stop-color="#ffffff"/><stop offset="1" stop-color="#c8d0f0"/></linearGradient>
<linearGradient id="gGray" x1="0" y1="0" x2="1" y2="1"><stop offset="0" stop-color="#e8e8e8"/><stop offset="1" stop-color="#b8b8b8"/></linearGradient>
<linearGradient id="gBlueBar" x1="0" y1="0" x2="0" y2="1"><stop offset="0" stop-color="#3a78e8"/><stop offset="1" stop-color="#8ab4f4"/></linearGradient>
<linearGradient id="gWin" x1="0" y1="0" x2="1" y2="1"><stop offset="0" stop-color="#ffffff"/><stop offset="1" stop-color="#c4d4ec"/></linearGradient>
<linearGradient id="gFold" x1="0" y1="0" x2="1" y2="1"><stop offset="0" stop-color="#fbe89a"/><stop offset="1" stop-color="#e0a838"/></linearGradient>
<radialGradient id="gGreenC" cx="0.4" cy="0.35" r="0.7"><stop offset="0" stop-color="#c8f0b0"/><stop offset="1" stop-color="#40a030"/></radialGradient>
<radialGradient id="gGrayC" cx="0.4" cy="0.35" r="0.7"><stop offset="0" stop-color="#f0f0f0"/><stop offset="1" stop-color="#a8a8a8"/></radialGradient>
<linearGradient id="gGreenBook" x1="0" y1="0" x2="1" y2="1"><stop offset="0" stop-color="#8cd080"/><stop offset="1" stop-color="#2f8a38"/></linearGradient>
<linearGradient id="gGold" x1="0" y1="0" x2="0" y2="1"><stop offset="0" stop-color="#fff0a0"/><stop offset="1" stop-color="#d8a020"/></linearGradient>
<linearGradient id="gArr" x1="0" y1="0" x2="1" y2="1"><stop offset="0" stop-color="#a8c8ff"/><stop offset="1" stop-color="#2a5ad0"/></linearGradient>
<pattern id="chk" width="2" height="2" patternUnits="userSpaceOnUse" patternTransform="rotate(45)"><rect width="2" height="2" fill="#f0f0f0"/><rect width="1" height="1" fill="#909090"/><rect x="1" y="1" width="1" height="1" fill="#909090"/></pattern>
</defs>
<rect x="14" y="51" width="14" height="14" rx="1" fill="url(#gFlop)"/>
<rect x="17" y="52" width="9" height="6" fill="url(#gLab)"/>
<rect x="17" y="57" width="9" height="1" fill="#3030a8"/>
<rect x="18" y="60" width="6" height="4" fill="#202030"/><rect x="21" y="61" width="2" height="3" fill="#e8e8f0"/>
<rect x="41" y="51" width="10" height="10" fill="#4444b4"/><rect x="43" y="52" width="6" height="1" fill="#fff"/>
<rect x="39" y="53" width="10" height="10" fill="#5050c0"/><rect x="41" y="54" width="6" height="1" fill="#fff"/>
<rect x="37" y="55" width="10" height="10" rx="0.5" fill="url(#gFlop)"/><rect x="39" y="56" width="6" height="4" fill="url(#gLab)"/>
<rect x="40" y="61" width="5" height="3" fill="#303040"/><rect x="42" y="62" width="2" height="2" fill="#ddd"/>
<path d="M64.5 51.5h5l2 2v7h-7z" fill="#e4e4e4" stroke="#8a8a8a"/>
<path d="M66 55.5h4M66 57.5h4" stroke="#9a9a9a"/>
<path d="M70.5 54.5h6l2 2v7h-8z" fill="#e4e4e4" stroke="#8a8a8a"/>
<path d="M72 58.5h5M72 60.5h5M72 62.5h5" stroke="#9a9a9a"/>
<path d="M91 51.5L96.5 60M98.5 51.5L93 60" stroke="#8a8a8a" stroke-width="1.3" fill="none"/>
<circle cx="92.5" cy="62.3" r="2" fill="none" stroke="#7a7a7a" stroke-width="1.3"/><circle cx="97" cy="61.8" r="2" fill="none" stroke="#7a7a7a" stroke-width="1.3"/>
<rect x="110.5" y="52.5" width="11" height="11" rx="1" fill="url(#gGray)" stroke="#8a8a8a"/>
<rect x="114" y="51" width="4" height="3" fill="#a0a0a0"/><rect x="113" y="53" width="6" height="2" fill="#909090"/>
<path d="M116.5 57.5h7l2 2v4.5h-9z" fill="#e8e8e8" stroke="#8a8a8a"/><path d="M118 60h4M118 62h5" stroke="#a0a0a0"/>
<path d="M139 57.5C140 52.5 146 51.5 146.3 56.5C146.5 59.5 144 62 142 63.5" stroke="#2f6fe0" stroke-width="2.2" fill="none"/>
<path d="M135 53L135 59.5L141.5 59.5Z" fill="#2a62d8"/>
<path d="M166 57.5C165 52.5 159.5 51.5 159 56.5C158.7 59.5 161 62 163 63.3" stroke="#909090" stroke-width="2.2" fill="none"/>
<path d="M170 53L170 59.5L163.5 59.5Z" fill="#8a8a8a"/>
<rect x="181.5" y="51.5" width="3" height="4" fill="#2a48b0" stroke="#1c2f88"/><rect x="182.2" y="52.3" width="1.5" height="1.5" fill="#d8e4ff"/>
<rect x="180.5" y="55.5" width="5" height="3" fill="#8aa8f0" stroke="#1c2f88"/>
<rect x="179.5" y="58.5" width="6" height="5" fill="url(#gLab)" stroke="#1c2f88"/>
<rect x="189.5" y="51.5" width="3" height="4" fill="#2a48b0" stroke="#1c2f88"/><rect x="190.2" y="52.3" width="1.5" height="1.5" fill="#d8e4ff"/>
<rect x="188.5" y="55.5" width="5" height="3" fill="#8aa8f0" stroke="#1c2f88"/>
<rect x="187.5" y="58.5" width="6" height="5" fill="url(#gLab)" stroke="#1c2f88"/>
<rect x="185" y="56" width="3" height="3" fill="#1c2f88"/>
<path d="M209 52.5L222.5 64.5M220.5 53L209 63.5" stroke="#e00000" stroke-width="2" stroke-linecap="round" fill="none"/>
<rect x="235.5" y="54.5" width="11" height="10" fill="#e2e2e2" stroke="#8c8c8c"/><path d="M246.5 55v10h-11" stroke="#6a6a6a" fill="none"/>
<path d="M237 60.5h2M240 60.5h5M237 62.5h2M240 62.5h5" stroke="#a0a0a0"/>
<path d="M237 56.5L241.5 52L244.5 55L240 59.5Z" fill="url(#chk)"/>
<path d="M241.5 51H248L249 54L244.5 57L242.5 54Z" fill="#b4b4b4"/><path d="M247 51H251V57.5Z" fill="#a0a0a0"/>
<rect x="258.5" y="51.5" width="15" height="13" fill="#e0e0e0" stroke="#8a8a8a"/>
<rect x="259" y="52" width="14" height="2" fill="#a8a8a8"/>
<rect x="261" y="56" width="1.5" height="1.5" fill="#8a8a8a"/><rect x="263" y="56" width="2" height="1" fill="#a0a0a0"/>
<rect x="261" y="59" width="1.5" height="1.5" fill="#8a8a8a"/><rect x="263" y="59" width="2" height="1" fill="#a0a0a0"/>
<rect x="261" y="62" width="1.5" height="1.5" fill="#8a8a8a"/><rect x="263" y="62" width="2" height="1" fill="#a0a0a0"/>
<rect x="267" y="56" width="1.5" height="1.5" fill="#8a8a8a"/><rect x="269" y="56" width="2" height="1" fill="#a0a0a0"/>
<rect x="267" y="59" width="1.5" height="1.5" fill="#8a8a8a"/><rect x="269" y="59" width="2" height="1" fill="#a0a0a0"/>
<rect x="267" y="62" width="1.5" height="1.5" fill="#8a8a8a"/><rect x="269" y="62" width="2" height="1" fill="#a0a0a0"/>
<text x="292.6" y="57.6" font-family="Liberation Serif" font-size="9.5" fill="#6a6a6a" text-rendering="geometricPrecision">A</text>
<text x="293" y="65.8" font-family="Liberation Serif" font-size="9.5" fill="#8a8a8a" text-rendering="geometricPrecision">Я</text>
<path d="M304.5 50v13" stroke="#6a6a6a" stroke-width="1.2"/><path d="M302 61l2.5 4l2.5-4z" fill="#6a6a6a"/>
<path d="M329.5 54.5h4l1 1h9v9h-14z" fill="url(#gFold)" stroke="#8a6a30" stroke-width="0.8"/>
<path d="M334 63.5C337.5 62.5 339.3 59.5 339.3 56L337 56L341 50.5L345 56L342.7 56C342.7 61 339.5 63.5 334 63.5Z" fill="#20a828" stroke="#0a6a10" stroke-width="0.6"/>
<circle cx="360" cy="57.7" r="6.6" fill="url(#gGreenC)" stroke="#1f7a1f" stroke-width="1"/>
<path d="M356 57.7L360 53.7V56H363.5V59.5H360V61.7Z" fill="#f4f4f4" stroke="#101010" stroke-width="0.9"/>
<circle cx="393" cy="58" r="6.6" fill="url(#gGrayC)" stroke="#8a8a8a" stroke-width="1"/>
<path d="M397 58L393 54V56.3H389.5V59.7H393V62Z" fill="#f0f0f0" stroke="#6a6a6a" stroke-width="0.9"/>
<rect x="424.5" y="51.5" width="12" height="6" fill="url(#gWin)" stroke="#2a4a8a"/>
<rect x="425" y="52" width="11" height="2" fill="#3a7ae8"/>
<rect x="424.5" y="58.5" width="12" height="6" fill="url(#gWin)" stroke="#2a4a8a"/>
<rect x="425" y="59" width="11" height="2" fill="#3a7ae8"/>
<rect x="446.5" y="50.5" width="12" height="15" fill="url(#gWin)" stroke="#3a5a9a"/>
<rect x="448" y="52" width="3" height="1.5" fill="#5a8ad8"/>
<path d="M448 58.5h2M448 60.5h2M448 62.5h2M451 58v6M451 61.5h6" stroke="#7a9ad0" stroke-width="0.9"/>
<circle cx="458" cy="54.5" r="3.8" fill="#f0b020" stroke="#b07010" stroke-width="0.6"/><circle cx="455" cy="57.5" r="3" fill="#e8a018" stroke="#b07010" stroke-width="0.6"/>
<path d="M493 52L494.5 50H498V62H493Z" fill="#3466d8"/><path d="M494 52.3L495.5 50.5H497.5L496 52.3Z" fill="#fff"/><rect x="494" y="54" width="2" height="1" fill="#a0b8f0"/>
<path d="M498 52L499.5 50H505V58H498Z" fill="#4a9e44"/><path d="M499 52.3L500.5 50.5H503L501.5 52.3Z" fill="#e8ffe0"/><rect x="503.5" y="50" width="1.5" height="8" fill="#1e4a1e"/>
<path d="M495 58.3L500 55.6L507 59.6V61.6L502 65L495 61.2Z" fill="url(#gGold)" stroke="#8a7020" stroke-width="0.7"/>
<path d="M495.3 58.6L502 62.3L507 59.6" stroke="#a08828" stroke-width="0.6" fill="none"/><path d="M500.5 63L505.5 60.5" stroke="#fff8e0" stroke-width="1.3"/>
<path d="M543 51.5L549.5 49.8L554 54.5L554 56L549 57.5L546.5 59L545 57Z" fill="#22aa22" stroke="#168016" stroke-width="0.5"/>
<path d="M546.5 57.6L553.5 55.6" stroke="#c8c8c8" stroke-width="1"/><path d="M546 52.5L549 51.8" stroke="#b8e8b8" stroke-width="0.8"/>
<path d="M551 61.5L555.5 57V59.2H559V63.8H555.5V66Z" fill="url(#gArr)" stroke="#1a48b0" stroke-width="0.6"/>
<path d="M619.5 62.5V52.5l1-1.5h4l1 1.5h6v9z" fill="url(#gFold)" stroke="#c08818" stroke-width="0.9"/>
<rect x="621.5" y="53.5" width="12" height="10.5" rx="1" fill="#fbeb98" stroke="#c08818" stroke-width="0.9"/>
<rect x="623.5" y="54.5" width="9" height="10" fill="#98a4a4" stroke="#606868" stroke-width="0.6"/>
<rect x="624.2" y="55.2" width="2.4" height="2.4" fill="#ee0000"/><rect x="624.2" y="58.2" width="5" height="2.3" fill="#ee0000"/>
<rect x="624.2" y="61.2" width="2.4" height="2.4" fill="#ee0000"/><rect x="627.2" y="61.2" width="5" height="2.4" fill="#ee0000"/>
<rect x="695.5" y="51.5" width="8" height="9.5" fill="url(#gWin)" stroke="#7890b8"/>
<path d="M703.5 52v9.5h-8" stroke="#1a2a48" stroke-width="1" fill="none"/>
<circle cx="702.5" cy="52.8" r="2.6" fill="#f0a818" stroke="#a86010" stroke-width="0.5"/><circle cx="700.3" cy="54.8" r="2.2" fill="#f8b820" stroke="#a86010" stroke-width="0.5"/>
<path d="M703 61.5L707.5 57V59.2H711V63.8H707.5V66Z" fill="url(#gArr)" stroke="#1a48b0" stroke-width="0.6"/>
<rect x="756.5" y="51.5" width="14" height="12" fill="url(#gWin)" stroke="#3a4a6a"/>
<path d="M770.5 52v12h-14" stroke="#2a3a5a" stroke-width="1" fill="none"/>
<path d="M758 53.5h5" stroke="#000" stroke-width="1.1"/><path d="M760 55.5h8M758 57.5h10M758 59.5h10" stroke="#606060" stroke-width="0.9"/>
<rect x="846.5" y="51.5" width="14" height="12" fill="url(#gGray)" stroke="#909090"/>
<text x="848" y="59" font-family="Liberation Sans" font-size="7" fill="#808080">A</text>
<path d="M853 55.5h6M853 57.5h6M853 59.5h6M848 61.5h11" stroke="#a0a0a0" stroke-width="0.9"/>
<rect x="16.5" y="77.5" width="9" height="9" fill="#fff" stroke="#2a7a2a"/>
<path d="M18 79L24 85M24 79L18 85" stroke="#3a9a3a" stroke-width="1.8"/>
<path d="M15 91L17.5 88L20 91Z" fill="#2a52a8"/>
<rect x="51" y="78" width="3" height="3" fill="#e00000"/>
<rect x="56" y="79" width="3" height="3" fill="#e00000"/>
<rect x="60" y="79" width="3" height="3" fill="#e00000"/>
<rect x="52" y="83" width="3" height="3" fill="#0000b0"/>
<rect x="56" y="83" width="3" height="3" fill="#e00000"/>
<rect x="60" y="83" width="3" height="3" fill="#0000b0"/>
<rect x="52" y="87" width="3" height="3" fill="#0000b0"/>
<rect x="56" y="87" width="3" height="3" fill="#0000b0"/>
<rect x="60" y="87" width="3" height="3" fill="#0000b0"/>
<rect x="64" y="87" width="3" height="3" fill="#0000b0"/>
<rect x="76.5" y="76.5" width="11" height="15" rx="2" fill="#c8d4e4" stroke="#5a6a80"/>
<rect x="78" y="78" width="8" height="3" fill="#3a7ae0"/>
<rect x="78.5" y="82.5" width="1.6" height="1.6" fill="#d03030"/>
<rect x="81.5" y="82.5" width="1.6" height="1.6" fill="#d03030"/>
<rect x="84.5" y="82.5" width="1.6" height="1.6" fill="#d03030"/>
<rect x="78.5" y="85.5" width="1.6" height="1.6" fill="#3a6ad0"/>
<rect x="81.5" y="85.5" width="1.6" height="1.6" fill="#3a6ad0"/>
<rect x="84.5" y="85.5" width="1.6" height="1.6" fill="#3a6ad0"/>
<rect x="78.5" y="88" width="1.6" height="1.6" fill="#3a6ad0"/>
<rect x="81.5" y="88" width="1.6" height="1.6" fill="#3a6ad0"/>
<rect x="84.5" y="88" width="1.6" height="1.6" fill="#3a6ad0"/>
<rect x="104.5" y="76.5" width="13" height="9" fill="url(#gWin)" stroke="#4a6aa0"/>
<path d="M107 79.5h9M109 81.5h7M109 83.5h7" stroke="#6a8ac0" stroke-width="0.9"/>
<path d="M108 86L111.5 89.5" stroke="#e08020" stroke-width="2.2"/>
<circle cx="105.8" cy="83.4" r="3.3" fill="#dceaff" stroke="#505a70" stroke-width="1"/>
<rect x="125" y="79" width="8" height="4" fill="url(#gGold)" stroke="#9a8020" stroke-width="0.6"/>
<rect x="134.5" y="78.5" width="5" height="4" fill="#fff" stroke="#101010"/>
<rect x="135" y="82.5" width="4.5" height="8" fill="#4a7ae8" stroke="#303a50" stroke-width="0.6"/>
<path d="M136 84.5h2.5M136 86.5h2.5M136 88.5h2.5" stroke="#c0d8ff" stroke-width="0.7"/>
<rect x="158" y="76" width="16" height="8.5" fill="#2a5ac0"/>
<ellipse cx="165" cy="80.3" rx="5.5" ry="2.8" fill="none" stroke="#c8dcff" stroke-width="0.9"/>
<ellipse cx="170.5" cy="83.5" rx="2.8" ry="1.1" fill="#e8b830" stroke="#a07810" stroke-width="0.5"/>
<ellipse cx="170.5" cy="85.5" rx="2.8" ry="1.1" fill="#e8b830" stroke="#a07810" stroke-width="0.5"/>
<ellipse cx="170.5" cy="87.5" rx="2.8" ry="1.1" fill="#e8b830" stroke="#a07810" stroke-width="0.5"/>
<ellipse cx="170.5" cy="89.5" rx="2.8" ry="1.1" fill="#e8b830" stroke="#a07810" stroke-width="0.5"/>
<ellipse cx="162" cy="88.3" rx="2.8" ry="1.1" fill="#e8b830" stroke="#a07810" stroke-width="0.5"/><ellipse cx="166" cy="90.5" rx="2.8" ry="1.1" fill="#e8b830" stroke="#a07810" stroke-width="0.5"/>
<rect x="196.5" y="83.5" width="13.5" height="7" fill="url(#gWin)" stroke="#3a5a8a"/>
<path d="M203 86.5h5M203 88.5h5" stroke="#7a8aa0" stroke-width="0.9"/>
<path d="M198.5 77.5h3v3h3v3h-3v3h-3v-3h-3v-3h3z" fill="#40d040" stroke="#108010" stroke-width="1"/>
<rect x="220.0" y="83.5" width="13.5" height="7" fill="url(#gWin)" stroke="#3a5a8a"/>
<path d="M221.5 87.5h3M225.5 87.5h6" stroke="#1030e0" stroke-width="1.2"/>
<path d="M222.0 77.5h3v3h3v3h-3v3h-3v-3h-3v-3h3z" fill="#40d040" stroke="#108010" stroke-width="1"/>
<rect x="243.0" y="83.5" width="13.5" height="7" fill="url(#gWin)" stroke="#3a5a8a"/>
<path d="M244.5 87.5h3M248.5 87.5h6" stroke="#101010" stroke-width="1.2"/>
<path d="M245.0 77.5h3v3h3v3h-3v3h-3v-3h-3v-3h3z" fill="#40d040" stroke="#108010" stroke-width="1"/>
<path d="M267.5 76.5h3v3h3v3h-3v3h-3v-3h-3v-3h3z" fill="#b0b0b0" stroke="#8a8a8a" stroke-width="0.8" transform="translate(0,1)"/>
<rect x="273.0" y="81.5" width="7" height="2" fill="#c0c0c0" stroke="#9a9a9a" stroke-width="0.6"/>
<rect x="274.0" y="85" width="6" height="2" fill="#c0c0c0" stroke="#9a9a9a" stroke-width="0.6"/>
<rect x="266.0" y="88.5" width="14" height="2" fill="#c0c0c0" stroke="#9a9a9a" stroke-width="0.6"/>
<circle cx="293.5" cy="80.5" r="3.6" fill="#b8b8b8" stroke="#8a8a8a" stroke-width="0.8"/><rect x="291" y="80" width="5" height="1.2" fill="#e8e8e8"/>
<rect x="289.5" y="83.5" width="13" height="7" fill="url(#gGray)" stroke="#8a8a8a"/><path d="M291 86h10M291 88h10" stroke="#a0a0a0" stroke-width="0.9"/>
<rect x="318.5" y="84.5" width="13" height="7" fill="url(#gWin)" stroke="#3a5a8a"/><path d="M322 87.5h8M320 89.5h10" stroke="#7a8aa0" stroke-width="0.9"/>
<rect x="317.5" y="77.5" width="3" height="3" fill="#2a48b0" stroke="#1c2f88"/>
<rect x="316.5" y="80.5" width="5" height="6" fill="#3a5ac0" stroke="#1c2f88"/>
<rect x="317.5" y="82" width="2.5" height="3.5" fill="#e8f0ff"/><rect x="318" y="78.2" width="1.3" height="1.3" fill="#c8d8ff"/>
<rect x="322.5" y="77.5" width="3" height="3" fill="#2a48b0" stroke="#1c2f88"/>
<rect x="321.5" y="80.5" width="5" height="6" fill="#3a5ac0" stroke="#1c2f88"/>
<rect x="322.5" y="82" width="2.5" height="3.5" fill="#e8f0ff"/><rect x="323" y="78.2" width="1.3" height="1.3" fill="#c8d8ff"/>
<rect x="344.5" y="77.5" width="14" height="12" fill="url(#gWin)" stroke="#3a5a8a"/>
<path d="M346 80.5h4" stroke="#101010" stroke-width="1.2"/><path d="M347 82.5h10M346 84.5h11M346 86.5h11" stroke="#606060" stroke-width="0.9"/>
<rect x="382.5" y="77.5" width="14" height="12" fill="url(#gWin)" stroke="#3a5a8a"/>
<circle cx="386.8" cy="81.2" r="1.5" fill="none" stroke="#202020" stroke-width="1.1"/><circle cx="392.6" cy="86.3" r="1.5" fill="none" stroke="#202020" stroke-width="1.1"/><path d="M393.8 79L386 88.5" stroke="#202020" stroke-width="1.2"/>
<rect x="409" y="77" width="12" height="13" fill="url(#gGreenBook)" stroke="#2a6a30" stroke-width="0.8"/>
<rect x="413" y="79" width="6" height="3" fill="#a8e0a0"/>
<path d="M408.5 77v10" stroke="#404040" stroke-width="0.9" stroke-dasharray="1 1"/>
<circle cx="409.5" cy="88.5" r="3" fill="#fff" stroke="#404050" stroke-width="0.9"/><path d="M409.5 86.8v1.7h1.5" stroke="#202020" stroke-width="0.7" fill="none"/>
<rect x="428.5" y="76.5" width="10" height="11" fill="url(#gWin)" stroke="#4a6aa0"/><rect x="429" y="77" width="9" height="2" fill="#4a82e8"/>
<text x="429.3" y="86" font-family="Liberation Sans" font-size="7.5" font-weight="bold" fill="#000">8</text>
<rect x="433.5" y="79.5" width="10" height="11" fill="url(#gWin)" stroke="#4a6aa0"/><rect x="434" y="80" width="9" height="2" fill="#4a82e8"/>
<text x="435.5" y="89.5" font-family="Liberation Sans" font-size="8.5" font-weight="bold" fill="#000">7</text>
<text x="464.3" y="81.6" font-family="Liberation Sans" font-size="7.2" font-weight="bold" fill="#000" textLength="10" lengthAdjust="spacingAndGlyphs">0%</text>
<path d="M461.5 84.5h3.5l1.5 1.5v4.5h-5z" fill="#fff" stroke="#3a4a70"/>
<path d="M469.5 84L475.5 90M475 84L469.5 90" stroke="#f02020" stroke-width="1.6"/>
<text x="483.8" y="81.6" font-family="Liberation Sans" font-size="7.2" font-weight="bold" fill="#000" textLength="16" lengthAdjust="spacingAndGlyphs">100%</text>
<path d="M484.5 84.5h3.5l1.5 1.5v4.5h-5z" fill="#fff" stroke="#3a4a70"/>
<path d="M490.5 87L493 89.5L499.5 83" stroke="#2a5ad0" stroke-width="1.8" fill="none"/>
<rect x="530.5" y="76.5" width="12" height="9" fill="url(#gWin)" stroke="#5a7ab0"/><rect x="531" y="77" width="11" height="2" fill="#3a6ad8"/>
<path d="M534.5 79v6M538.5 79v6M531 82.5h11" stroke="#90a8d0" stroke-width="0.8"/>
<rect x="533.5" y="81.5" width="9" height="10" fill="url(#gWin)" stroke="#3a4a70"/>
<path d="M535 87.5h1M537 87.5h4M535 89.5h1M537 89.5h4" stroke="#505a70" stroke-width="0.9"/>
<path d="M536 84L540 80.5L544 81L545 83L541 86Z" fill="#e8d040" stroke="#7a6a10" stroke-width="0.5"/><rect x="544" y="81" width="2" height="5" fill="#40a040"/>
<rect x="621.5" y="76.5" width="15" height="14" fill="url(#gWin)" stroke="#3a4a6a"/>
<rect x="622" y="77" width="14" height="2" fill="#5a8ae8"/>
<path d="M624 80.5h10M624 83.5h10M624 86.5h10M627 79v10M631 79v10" stroke="#c8d4e8" stroke-width="0.8"/>
<text x="624.5" y="88" font-family="Liberation Serif" font-size="10" font-weight="bold" fill="#101010">Σ</text>
<rect x="681.5" y="76.5" width="15" height="14" fill="url(#gWin)" stroke="#3a4a6a"/>
<rect x="682" y="77" width="14" height="2" fill="#5a8ae8"/>
<rect x="686.5" y="79.5" width="6" height="6" fill="#f0c020" stroke="#a08010" stroke-width="0.6"/><rect x="683.5" y="82.5" width="6" height="6" fill="#f0c020" stroke="#a08010" stroke-width="0.6"/>
<rect x="755.5" y="76.5" width="15" height="14" fill="url(#gWin)" stroke="#3a4a6a"/>
<rect x="756" y="77" width="14" height="2" fill="#5a8ae8"/>
<path d="M758 87v3M761 85v5M764 86v4M767 83v7" stroke="#a8d8f0" stroke-width="2"/>
<path d="M757 88.5L760.5 84.5L763 86.5L769 80" stroke="#20a020" stroke-width="1.8" fill="none"/>
<rect x="831.5" y="76.5" width="15" height="14" fill="url(#gWin)" stroke="#3a4a6a"/>
<rect x="832" y="77" width="14" height="2" fill="#5a8ae8"/>
<path d="M834 84.5L837 88L844 80" stroke="#e04020" stroke-width="1.8" fill="none"/>
<path d="M280 56h5l-2.5 3z" fill="#808080"/>
<path d="M313 56h5l-2.5 3z" fill="#808080"/>
<path d="M374 56h5l-2.5 3z" fill="#000"/>
<path d="M407 56h5l-2.5 3z" fill="#808080"/>
<path d="M35 82h5l-2.5 3z" fill="#000"/>
<path d="M147 82h5l-2.5 3z" fill="#000"/>
<path d="M180 82h5l-2.5 3z" fill="#000"/>
<path d="M366 82h5l-2.5 3z" fill="#000"/>
<path d="M450 82h5l-2.5 3z" fill="#000"/>
<path d="M919 81h5l-2.5 3z" fill="#000"/>
</svg>
</div></body></html>
